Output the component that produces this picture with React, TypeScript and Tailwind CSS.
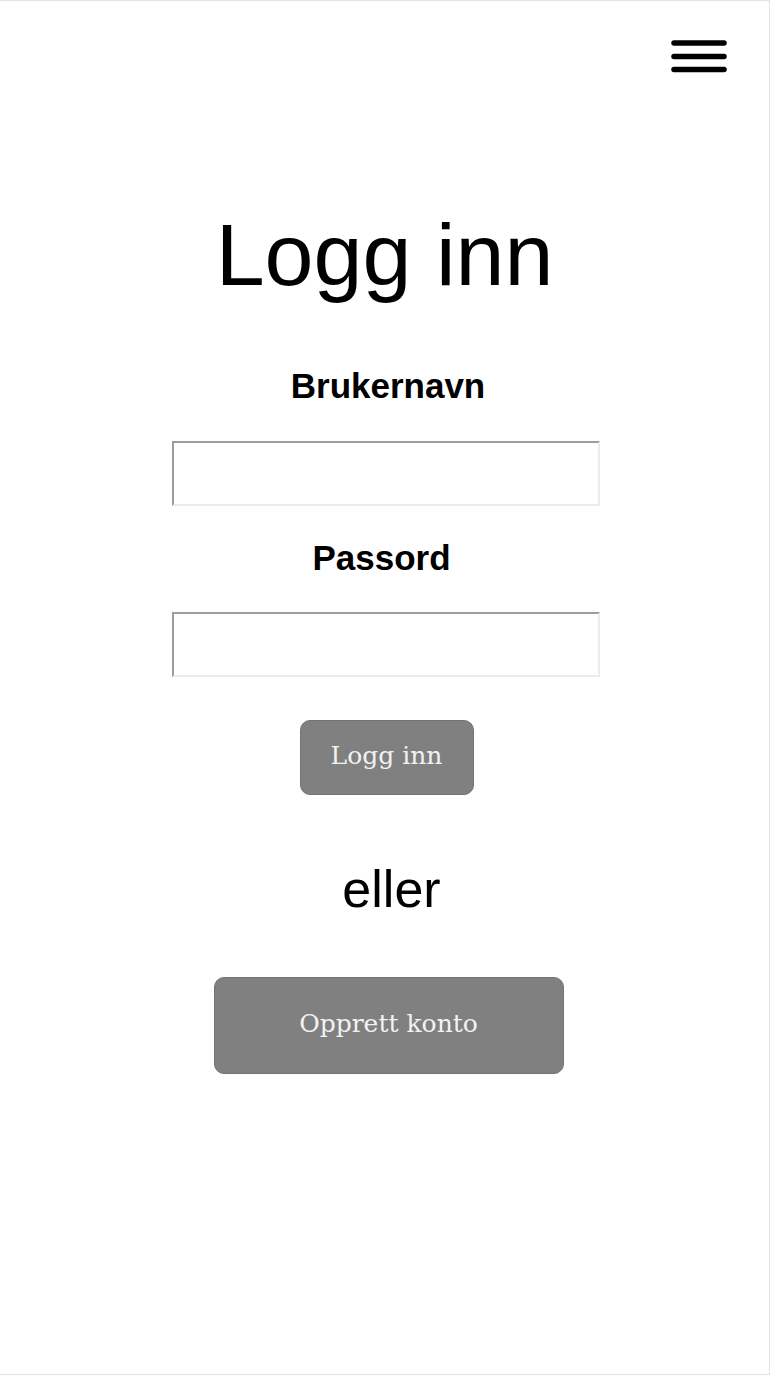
import React from 'react';

const sans = { fontFamily: '"Liberation Sans", Arial, sans-serif' };
const serif = { fontFamily: '"DejaVu Serif", serif' };

/**
 * Simple login page: hamburger menu, title, two fields and two buttons
 */
export default function App() {
  return (
    <div className="w-[770px] h-[1375px] bg-white border-t border-r border-b border-[#e2e2e2] flex flex-col" style={sans}>
      {/* Header with menu icon */}
      <div className="flex justify-end pt-[36px] pr-[42px]">
        <button aria-label="Meny" className="block">
          <svg width="56" height="38" viewBox="0 0 56 38">
            <g stroke="#000" strokeWidth={5.5} strokeLinecap="round">
              <line x1="3" y1="6" x2="53" y2="6" />
              <line x1="3" y1="19.5" x2="53" y2="19.5" />
              <line x1="3" y1="32.5" x2="53" y2="32.5" />
            </g>
          </svg>
        </button>
      </div>

      <div className="flex flex-col items-center">
        <h1 className="mt-[136px] text-[88px] leading-none text-black">Logg inn</h1>

        <label htmlFor="brukernavn" className="mt-[69px] ml-[7px] text-[35px] leading-none font-bold text-black">
          Brukernavn
        </label>
        <input
          id="brukernavn"
          type="text"
          className="mt-[38px] ml-[2px] w-[428px] h-[65px] border-2 border-t-[#9d9d9d] border-l-[#9d9d9d] border-r-[#ececec] border-b-[#ececec] bg-white outline-none"
        />

        <label htmlFor="passord" className="mt-[34px] mr-[6px] text-[35px] leading-none font-bold text-black">
          Passord
        </label>
        <input
          id="passord"
          type="password"
          className="mt-[37px] ml-[2px] w-[428px] h-[65px] border-2 border-t-[#9d9d9d] border-l-[#9d9d9d] border-r-[#ececec] border-b-[#ececec] bg-white outline-none"
        />

        <button
          className="mt-[43px] ml-[4px] w-[174px] h-[75px] rounded-[10px] bg-[#808080] border border-[#747474] text-[#f2f2f2] text-[25px] pb-[3px]"
          style={serif}
        >
          Logg inn
        </button>

        <p className="mt-[68px] ml-[14px] text-[52px] leading-none text-black">eller</p>

        <button
          className="mt-[62px] ml-[8px] w-[350px] h-[97px] rounded-[10px] bg-[#808080] border border-[#747474] text-[#f2f2f2] text-[25px] pb-[3px]"
          style={serif}
        >
          Opprett konto
        </button>
      </div>
    </div>
  );
}
